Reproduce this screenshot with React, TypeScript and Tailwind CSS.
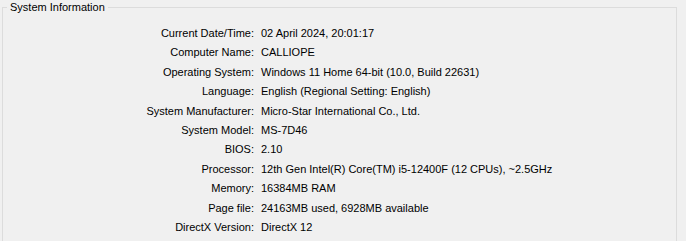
const rows: [string, string][] = [
  ["Current Date/Time:", "02 April 2024, 20:01:17"],
  ["Computer Name:", "CALLIOPE"],
  ["Operating System:", "Windows 11 Home 64-bit (10.0, Build 22631)"],
  ["Language:", "English (Regional Setting: English)"],
  ["System Manufacturer:", "Micro-Star International Co., Ltd."],
  ["System Model:", "MS-7D46"],
  ["BIOS:", "2.10"],
  ["Processor:", "12th Gen Intel(R) Core(TM) i5-12400F (12 CPUs), ~2.5GHz"],
  ["Memory:", "16384MB RAM"],
  ["Page file:", "24163MB used, 6928MB available"],
  ["DirectX Version:", "DirectX 12"],
];

export default function App() {
  return (
    <div className="w-[686px] h-[241px] overflow-hidden bg-[#f0f0f0] text-[11px] text-black font-['Liberation_Sans',sans-serif]">
      <fieldset className="ml-[2px] w-[675px] h-[260px] border border-[#dcdcdc] px-0 pt-[10px] pb-0">
        <legend className="ml-[4px] px-[3px] leading-[14px]">System Information</legend>
        <div className="grid grid-cols-[251px_1fr] gap-x-[7px]">
          {rows.map(([label, value]) => (
            <div key={label} className="contents">
              <div className="text-right leading-[19.4px] whitespace-nowrap">{label}</div>
              <div className="leading-[19.4px] whitespace-nowrap">{value}</div>
            </div>
          ))}
        </div>
      </fieldset>
    </div>
  );
}
